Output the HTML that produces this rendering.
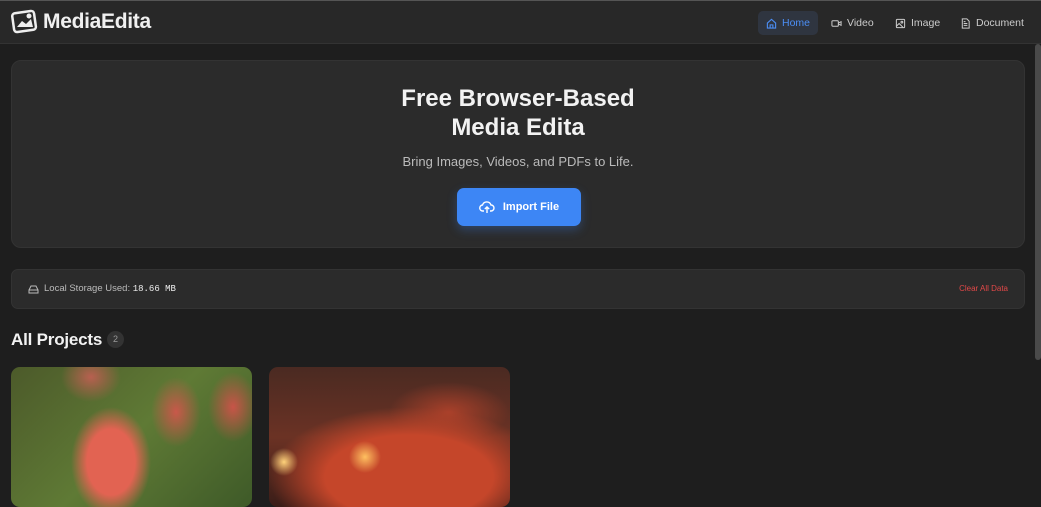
<!DOCTYPE html>
<html><head><meta charset="utf-8"><style>
*{box-sizing:border-box;margin:0;padding:0}
body{width:1041px;height:500px;overflow:hidden;background:#1e1e1e;font-family:"Liberation Sans",sans-serif;color:#eee;position:relative}
.hdr{position:absolute;left:0;top:0;width:1041px;height:44px;background:#282828;border-top:1px solid #555;border-bottom:1px solid #333}
.logo{position:absolute;left:11px;top:8px}
.brand{position:absolute;left:43px;top:9px;font-size:21px;font-weight:bold;color:#f0f0f0;letter-spacing:-0.3px}
.nav{position:absolute;top:10px;height:24px;font-size:10.5px;color:#ccc;display:flex;align-items:center;gap:5px;padding:0 8px;border-radius:5px}
.hero{position:absolute;left:11px;top:60px;width:1014px;height:188px;background:#2b2b2b;border:1px solid #333;border-radius:10px;text-align:center}
.hero h1{margin-top:23px;font-size:24px;line-height:29px;font-weight:bold;color:#f2f2f2}
.hero p{margin-top:12px;font-size:13px;color:#bbb}
.btn{position:absolute;left:445px;top:127px;width:124px;height:38px;background:#3d86f5;border-radius:7px;color:#fff;font-size:11px;font-weight:bold;display:flex;align-items:center;justify-content:center;gap:8px;box-shadow:0 4px 10px rgba(61,134,245,.3)}
.st{position:absolute;left:11px;top:269px;width:1014px;height:40px;background:#2b2b2b;border:1px solid #333;border-radius:7px;font-size:9.5px;color:#bbb}
.card{position:absolute;top:367px;width:241px;height:140px;border-radius:9px;overflow:hidden}
</style></head><body>
<div class="hdr">
<svg class="logo" width="28" height="26" viewBox="0 0 28 26"><rect x="2" y="3" width="22" height="19" rx="3" transform="rotate(-8 13 12)" fill="none" stroke="#eee" stroke-width="2.5"/><path d="M6 18 L11 12 L15 15 L20 10 L22 18Z" fill="#eee"/><circle cx="18" cy="7" r="2.5" fill="#eee"/></svg>
<div class="brand">MediaEdita</div>
<div class="nav" style="left:758px;background:#2f3540;color:#4b8ef5"><svg width="11" height="11" viewBox="0 0 12 12" fill="none" stroke="#4b8ef5" stroke-width="1.2"><path d="M1.5 5.5 6 1.5l4.5 4V11h-9z M4.5 11V7.5h3V11"/></svg>Home</div>
<div class="nav" style="left:823px"><svg width="11" height="11" viewBox="0 0 12 12" fill="none" stroke="#ccc" stroke-width="1.1"><rect x="1" y="3" width="7" height="6" rx="1"/><path d="M8 5.5l3-1.5v4l-3-1.5"/></svg>Video</div>
<div class="nav" style="left:887px"><svg width="11" height="11" viewBox="0 0 12 12" fill="none" stroke="#ccc" stroke-width="1.1"><rect x="1.5" y="1.5" width="9" height="9" rx="1"/><path d="M1.5 9l3-3 4 4"/><circle cx="7.5" cy="4.5" r="1"/></svg>Image</div>
<div class="nav" style="left:952px"><svg width="11" height="11" viewBox="0 0 12 12" fill="none" stroke="#ccc" stroke-width="1.1"><path d="M2.5 1h5l2.5 2.5V11h-7.5z M4 6h4M4 8h4M4 4h2"/></svg>Document</div>
</div>
<div style="position:absolute;left:1035px;top:44px;width:6px;height:316px;background:#4a4a4a;border-radius:3px"></div>
<div class="hero"><h1>Free Browser-Based<br>Media Edita</h1><p>Bring Images, Videos, and PDFs to Life.</p>
<div class="btn"><svg width="16" height="14" viewBox="0 0 16 14" fill="none" stroke="#fff" stroke-width="1.4"><path d="M5 11H4a3 3 0 0 1-.5-6A4.5 4.5 0 0 1 12 5a3 3 0 0 1 0 6h-1M8 13V7M5.8 9 8 7l2.2 2"/></svg>Import File</div></div>
<div class="st"><svg style="position:absolute;left:16px;top:14px" width="11" height="10" viewBox="0 0 11 10" fill="none" stroke="#bbb" stroke-width="1"><path d="M1 6h9v3H1z M1 6l2-4h5l2 4"/></svg>
<span style="position:absolute;left:32px;top:13px">Local Storage Used: <span style="font-family:'Liberation Mono',monospace;color:#eee;font-size:9px">18.66 MB</span></span>
<span style="position:absolute;right:16px;top:14px;color:#e04848;font-size:8px">Clear All Data</span></div>
<div style="position:absolute;left:11px;top:330px;font-size:17px;font-weight:bold;color:#f2f2f2;letter-spacing:-0.2px">All Projects</div>
<div style="position:absolute;left:107px;top:331px;width:17px;height:17px;border-radius:50%;background:#333;color:#999;font-size:9px;text-align:center;line-height:17px">2</div>
<div class="card" style="left:11px;background:radial-gradient(ellipse 40px 55px at 100px 95px,#e26352 60%,transparent 100%),radial-gradient(ellipse 25px 35px at 165px 45px,#c9584a,transparent),radial-gradient(ellipse 25px 35px at 222px 40px,#c85448,transparent),radial-gradient(ellipse 30px 25px at 80px 10px,#b86050,transparent),linear-gradient(135deg,#4c5a2a,#5f7a35 50%,#3e5a28)"></div>
<div class="card" style="left:269px;background:radial-gradient(circle 14px at 15px 95px,#ffd27a,transparent),radial-gradient(circle 16px at 96px 90px,#ffc060,transparent),radial-gradient(ellipse 140px 70px at 140px 110px,#c5462a 60%,transparent),radial-gradient(ellipse 60px 30px at 180px 45px,#a8402a,transparent),linear-gradient(180deg,#4a2a22,#6b3224 50%,#3a1d18)"></div>
</body></html>
